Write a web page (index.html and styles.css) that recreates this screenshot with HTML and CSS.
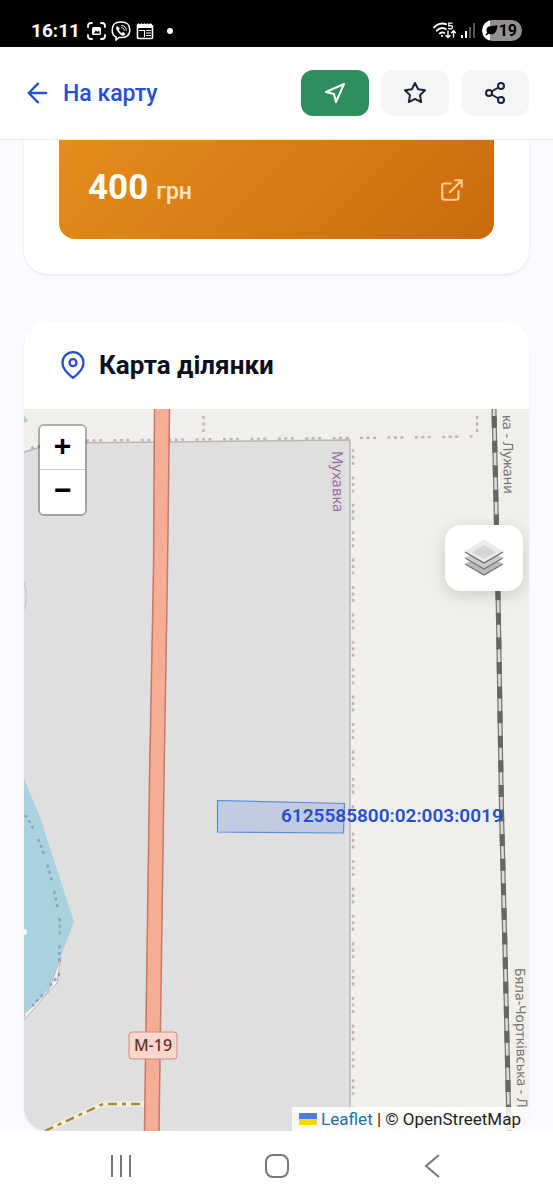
FILE: index.html
```html
<!DOCTYPE html>
<html lang="uk">
<head>
    <meta charset="UTF-8">
    <meta name="viewport" content="width=device-width, initial-scale=1.0">
    <title>Карта ділянки</title>
    <link rel="stylesheet" href="styles.css">
</head>
<body>

    <!-- Phone status bar -->
    <div class="status-bar">
        <span class="time">16:11</span>
        <svg width="19" height="18" viewBox="0 0 19 18" fill="none" stroke="#fff" stroke-width="1.8" stroke-linecap="round">
            <path d="M1 5V4q0-3 3-3h1M14 1h1q3 0 3 3v1M18 13v1q0 3-3 3h-1M5 17H4q-3 0-3-3v-1"/>
            <rect x="5" y="5" width="9" height="8" rx="1.5" fill="#fff" stroke="none"/>
            <path d="M6.500 11.500l2.500-3 1.500 1.500 1.500-1.500 1 3z" fill="#000" stroke="none"/>
        </svg>
        <svg width="20" height="20" viewBox="0 0 20 20" fill="none" stroke="#fff" stroke-width="1.500" stroke-linecap="round">
            <path d="M10 1C4 1 1.200 3 1.200 9c0 4 1.300 6 3.800 7v3l3-2.500c7 .5 10.800-1.500 10.800-7.500S16 1 10 1z"/>
            <path d="M6.200 5.200c-1.500 1-1 2.300.3 4.500 1.500 2.500 3.500 4.300 5.700 4.800 1 .2 2-1.200 1.800-1.800l-2-1.500-1.200 1c-1.500-.6-2.800-2-3.200-3.500l1-1z" fill="#fff" stroke-width=".5"/>
            <path d="M10.500 4.500c3 0 4.800 2 4.800 4.800M10.700 6.700c1.600.1 2.400 1 2.500 2.500" stroke-width="1"/>
        </svg>
        <svg width="18" height="18" viewBox="0 0 18 18" fill="none" stroke="#fff">
            <path d="M1.500 3v12.500q0 1 1 1h13q1 0 1-1V3" stroke-width="1.600"/>
            <path d="M1 2.200l1.500-1 1.500 1 1.500-1 1.500 1 1.500-1 1.500 1 1.500-1 1.500 1 1.500-1 1.500 1V6H1z" fill="#fff" stroke="none"/>
            <path d="M3 8.500h5M10 8.500h5M10 11h5M10 13.500h5M8.500 8v7" stroke-width="1.200"/>
        </svg>
        <span class="dot"></span>
        <div class="status-right">
            <svg width="23" height="17" viewBox="0 0 23 17" fill="none" stroke="#fff" stroke-width="1.900" stroke-linecap="round">
                <path d="M1 5.500C4 2 9 .500 13 2.200M3.800 8.700c2.500-2.700 6-3.400 9-1.700M6.800 11.500c1.500-1.300 3-1.500 4.500-.5"/>
                <circle cx="9" cy="14" r="1" fill="#fff" stroke="none"/>
                <path d="M19 1.200h-3.200v2.600c3-.8 4 .3 3.600 1.800-.4 1.400-2.200 1.700-3.800.8" stroke-width="1.300"/>
                <path d="M15 9v6M13 13.500l2 2 2-2M20.500 15V9M18.500 10.800l2-2 2 2" stroke-width="1.400"/>
            </svg>
            <svg width="14" height="16" viewBox="0 0 14 16">
                <path d="M0 12h2v3H0zM4 8h2v7H4z" fill="#fff"/>
                <path d="M8 4h2v11H8zM12 0h2v15h-2z" fill="#555"/>
            </svg>
            <span class="battery">
                <svg width="13" height="11" viewBox="0 0 13 11"><path d="M12.500 0C8 1.500 1.500 0 1.500 5c0 1.200.4 2 .8 2.500L.5 9.600l1 .9 2-1.800C9 11 12 7 12.500 0z" fill="#000"/></svg>19
            </span>
        </div>
    </div>

    <header class="header">
        <a href="#" class="back-link">
            <svg width="28" height="28" viewBox="0 0 24 24" fill="none" stroke="currentColor" stroke-width="2" stroke-linecap="round" stroke-linejoin="round"><path d="M19 12H4M12 4l-8 8 8 8"/></svg>
            На карту
        </a>
        <div class="header-actions">
            <button class="icon-btn icon-btn-green" aria-label="Маршрут">
                <svg width="24" height="24" viewBox="0 0 24 24" fill="none" stroke="currentColor" stroke-width="2" stroke-linecap="round" stroke-linejoin="round"><path d="M3 11l18-8-8 18-2-8z"/></svg>
            </button>
            <button class="icon-btn" aria-label="В обране">
                <svg width="24" height="24" viewBox="0 0 24 24" fill="none" stroke="currentColor" stroke-width="2" stroke-linejoin="round"><path d="M12 2l3.090 6.260L22 9.270l-5 4.870 1.180 6.880L12 17.770l-6.180 3.250L7 14.140 2 9.270l6.910-1.010z"/></svg>
            </button>
            <button class="icon-btn" aria-label="Поділитися">
                <svg width="24" height="24" viewBox="0 0 24 24" fill="none" stroke="currentColor" stroke-width="2"><circle cx="18" cy="5" r="3"/><circle cx="6" cy="12" r="3"/><circle cx="18" cy="19" r="3"/><path d="M8.600 13.500l6.800 4M15.400 6.500l-6.800 4"/></svg>
            </button>
        </div>
    </header>

    <main class="content">
        <section class="price-card">
            <a href="#" class="price-box">
                <span class="price"><b>400</b> грн</span>
                <svg width="26" height="26" viewBox="0 0 24 24" fill="none" stroke="currentColor" stroke-width="2" stroke-linecap="round" stroke-linejoin="round"><path d="M18 13v6a2 2 0 0 1-2 2H5a2 2 0 0 1-2-2V8a2 2 0 0 1 2-2h6M15 3h6v6M10 14L21 3"/></svg>
            </a>
        </section>

        <section class="map-card">
            <h2 class="map-title">
                <svg width="28" height="28" viewBox="0 0 24 24" fill="none" stroke="currentColor" stroke-width="2"><path d="M21 10c0 7-9 13-9 13s-9-6-9-13a9 9 0 0 1 18 0z"/><circle cx="12" cy="10" r="3"/></svg>
                Карта ділянки
            </h2>
            <div class="map">
                <svg class="map-canvas" viewBox="24 409 505 722" preserveAspectRatio="xMinYMin slice">
                    <rect x="24" y="409" width="505" height="722" fill="#f0efea"/>
                    <!-- village area -->
                    <path d="M20 454Q42 445 62 443L170 442 350 440V1135H20z" fill="#dfdfdf" stroke="#bdb6b8" stroke-width="1.500"/>
                    <path d="M24 415l4 6-4 2zM24 779l16 38 34 105-12 31-14 37-24 25z" fill="#aad1de"/>
                    <path d="M61 957l-4 26-33 37v-6l24-22z" fill="#f4f2ee" stroke="#c0b5b2"/>
                    <path d="M24 582q4 12 1 27" fill="none" stroke="#c8c3b8"/>
                    <circle cx="24" cy="932" r="3" fill="#f4f4f0"/>
                    <!-- district borders -->
                    <g fill="none" stroke="#c4b3b8" stroke-width="2.500" stroke-dasharray="3 3.500 3 3.500 3 11.400">
                        <path d="M31 448L62 441M86 440.500L350 438 473 436.500"/>
                        <path d="M353 449V1107M203.500 416v18M477 416v18"/>
                        <path d="M25 815Q48 848 60 922L59 975 24 1016" stroke="#8ba4bb"/>
                    </g>
                    <!-- dirt road -->
                    <path d="M45 1131L103 1104H146" fill="none" stroke="#f8f0d2" stroke-width="5"/>
                    <path d="M45 1131L103 1104H146" fill="none" stroke="#a08a50" stroke-width="2.500" stroke-dasharray="9 5 4 5"/>
                    <!-- highway -->
                    <path d="M154 409H170L167 570 164 780 159 1131H144L149 780 153 570z" fill="#f5ad94"/>
                    <path d="M154.500 409L153.500 570 149.500 780 144.500 1131M169.500 409L167.500 570 164 780 159 1131" fill="none" stroke="#c6796a" stroke-width="1.500"/>
                    <rect x="129" y="1032" width="48" height="27" rx="3" fill="#f7d6cc" stroke="#d08d7d"/>
                    <text x="153" y="1051" class="road-label" text-anchor="middle">M-19</text>
                    <!-- railway -->
                    <path d="M494 409L498.500 620 501.500 810 505 950 509 1131" fill="none" stroke="#777" stroke-width="5"/>
                    <path d="M494 409L498.500 620 501.500 810 505 950 509 1131" fill="none" stroke="#deddd8" stroke-width="2.500"/>
                    <path d="M494 409L498.500 620 501.500 810 505 950 509 1131" fill="none" stroke="#666" stroke-width="5" stroke-dasharray="12 12.600" stroke-dashoffset="-7"/>
                    <text class="place-label" transform="translate(332 451) rotate(89)">Мухавка</text>
                    <text class="rail-label" transform="translate(504 494) rotate(89)" text-anchor="end">ка - Лужани</text>
                    <text class="rail-label" transform="translate(515 968) rotate(89)">Бяла-Чортківська - Л</text>
                    <!-- selected parcel -->
                    <path d="M217.500 800.500L344.500 803.500 343.500 833 217.500 832z" fill="#3b75f0" fill-opacity=".18" stroke="#5b8be0" stroke-width="1.200"/>
                    <text x="281" y="822" class="parcel-label">6125585800:02:003:0019</text>
                </svg>

                <div class="zoom-control">
                    <button aria-label="Збільшити">+</button>
                    <button aria-label="Зменшити">−</button>
                </div>

                <button class="layers-btn" aria-label="Шари">
                    <svg width="40" height="38" viewBox="0 0 40 38">
                        <path d="M1 25L20 14 39 25 20 36z" fill="#b9b9b9"/>
                        <path d="M1 25l19 11 19-11" fill="none" stroke="#777" stroke-width="1.300"/>
                        <path d="M1 19L20 8 39 19 20 30z" fill="#cacaca"/>
                        <path d="M1 19l19 11 19-11" fill="none" stroke="#777" stroke-width="1.300"/>
                        <path d="M1 13L20 1 39 13 20 24z" fill="#ececec" stroke="#ddd" stroke-width=".5"/>
                        <path d="M8 13L20 6 32 13 20 20z" fill="#d6d6d6"/>
                        <path d="M1 13l19 11 19-11" fill="none" stroke="#666" stroke-width="1.300"/>
                    </svg>
                </button>

                <div class="attribution">
                    <a href="#"><svg width="18" height="12" viewBox="0 0 18 12"><path fill="#4c7be1" d="M0 0h18v6H0z"/><path fill="#ffd500" d="M0 6h18v6H0z"/></svg> Leaflet</a> | © OpenStreetMap
                </div>
            </div>
        </section>
    </main>

    <!-- Phone navigation -->
    <nav class="phone-nav">
        <button aria-label="Останні"><svg width="24" height="24" viewBox="0 0 24 24" stroke="#777" stroke-width="2"><path d="M3 1v22M12 1v22M21 1v22"/></svg></button>
        <button aria-label="Додому"><svg width="24" height="24" viewBox="0 0 24 24" fill="none" stroke="#777" stroke-width="2"><rect x="1" y="1" width="22" height="22" rx="7"/></svg></button>
        <button aria-label="Назад"><svg width="24" height="24" viewBox="0 0 24 24" fill="none" stroke="#777" stroke-width="2"><path d="M19 1L6 12l13 11"/></svg></button>
    </nav>

</body>
</html>
```
FILE: styles.css
```css
* {
    box-sizing: border-box;
}
body {
    margin: 0;
    min-height: 100vh;
    display: flex;
    flex-direction: column;
    font-family: Roboto, "Noto Sans", sans-serif;
    background-color: #fafbff;
    color: #0b0f1c;
}
svg {
    display: block;
    flex-shrink: 0;
}
button {
    padding: 0;
    border: none;
    cursor: pointer;
    display: flex;
    justify-content: center;
    align-items: center;
}
a {
    text-decoration: none;
}
.status-bar {
    display: flex;
    align-items: center;
    gap: 5px;
    padding: 18px 31px 4px;
    background: #000;
    color: #fff;
}
.time {
    font-size: 19px;
    line-height: 25px;
    font-weight: 700;
    margin-right: 2px;
}
.dot {
    width: 6px;
    height: 6px;
    margin-left: 8px;
    border-radius: 50%;
    background: #fff;
}
.status-right {
    display: flex;
    align-items: center;
    gap: 5px;
    margin-left: auto;
}
.battery {
    display: flex;
    align-items: center;
    gap: 1px;
    height: 21px;
    margin-left: 2px;
    padding: 0 5px 0 3px;
    border-radius: 11px;
    background: linear-gradient(90deg, #fff 19%, #919191 19%);
    color: #000;
    font-size: 16px;
    font-weight: 700;
}
.header {
    display: flex;
    justify-content: space-between;
    align-items: center;
    padding: 23px 24px;
    background: #fff;
    border-bottom: 1px solid #e8eaee;
}
.back-link {
    display: flex;
    align-items: center;
    gap: 11px;
    color: #2650d0;
    font-size: 23px;
    font-weight: 500;
}
.header-actions {
    display: flex;
    gap: 12px;
}
.icon-btn {
    width: 68px;
    height: 46px;
    border-radius: 12px;
    background: #f3f5f7;
    color: #1c2338;
}
.icon-btn-green {
    background: #2e8f5e;
    color: #fff;
}
.content {
    flex: 1;
    display: flex;
    flex-direction: column;
    gap: 48px;
    padding: 0 24px;
}
.price-card {
    padding: 0 35px 35px;
    background: #fff;
    border-radius: 0 0 24px 24px;
    box-shadow: 0 1px 3px rgba(15, 23, 42, 0.1);
}
.price-box {
    display: flex;
    justify-content: space-between;
    align-items: center;
    padding: 28px 29px 27px;
    border-radius: 0 0 16px 16px;
    background: linear-gradient(135deg, #e58d1a, #cc6a0f);
    color: #ffce8b;
}
.price {
    display: flex;
    align-items: baseline;
    gap: 8px;
    color: #fce3bd;
    font-size: 23px;
    line-height: 40px;
    font-weight: 500;
}
.price b {
    color: #fff;
    font-size: 35px;
    font-weight: 700;
}
.map-card {
    flex: 1;
    display: flex;
    flex-direction: column;
    overflow: hidden;
    background: #fff;
    border-radius: 24px;
    box-shadow: 0 1px 3px rgba(15, 23, 42, 0.06);
}
.map-title {
    display: flex;
    align-items: center;
    gap: 12px;
    margin: 0;
    padding: 27px 35px 28px;
    font-size: 26px;
    line-height: 32px;
    font-weight: 700;
}
.map-title svg {
    color: #2650d0;
}
.map {
    flex: 1;
    position: relative;
    min-height: 400px;
}
.map-canvas {
    position: absolute;
    width: 100%;
    height: 100%;
}
.road-label {
    font: 500 16px "Noto Sans", sans-serif;
    fill: #6b2f24;
}
.place-label {
    font: 15px "Noto Sans", sans-serif;
    fill: #9c6da6;
}
.rail-label {
    font: 14px "Noto Sans", sans-serif;
    fill: #777;
}
.parcel-label {
    font-size: 19px;
    font-weight: 600;
    fill: #2650d0;
}
.zoom-control {
    position: absolute;
    top: 15px;
    left: 14px;
    border: 2px solid rgba(0, 0, 0, 0.28);
    border-radius: 6px;
    background-clip: padding-box;
}
.zoom-control button {
    width: 45px;
    height: 44px;
    background: #fff;
    color: #000;
    font: bold 30px "Liberation Mono", monospace;
}
.zoom-control button:first-child {
    border-bottom: 1px solid #ccc;
    border-radius: 4px 4px 0 0;
}
.zoom-control button:last-child {
    border-radius: 0 0 4px 4px;
}
.layers-btn {
    position: absolute;
    top: 116px;
    right: 6px;
    width: 78px;
    height: 66px;
    border-radius: 16px;
    background: #fff;
    box-shadow: 0 4px 16px rgba(0, 0, 0, 0.15);
}
.attribution {
    position: absolute;
    right: 0;
    bottom: 0;
    padding: 0 8px 0 7px;
    background: rgba(255, 255, 255, 0.85);
    color: #222;
    font-size: 17px;
    line-height: 24px;
}
.attribution a {
    color: #1f6fa5;
}
.attribution svg {
    display: inline-block;
}
.phone-nav {
    display: flex;
    justify-content: space-between;
    padding: 23px 109px 22px;
    background: #fff;
}
.phone-nav button {
    background: none;
}
```
